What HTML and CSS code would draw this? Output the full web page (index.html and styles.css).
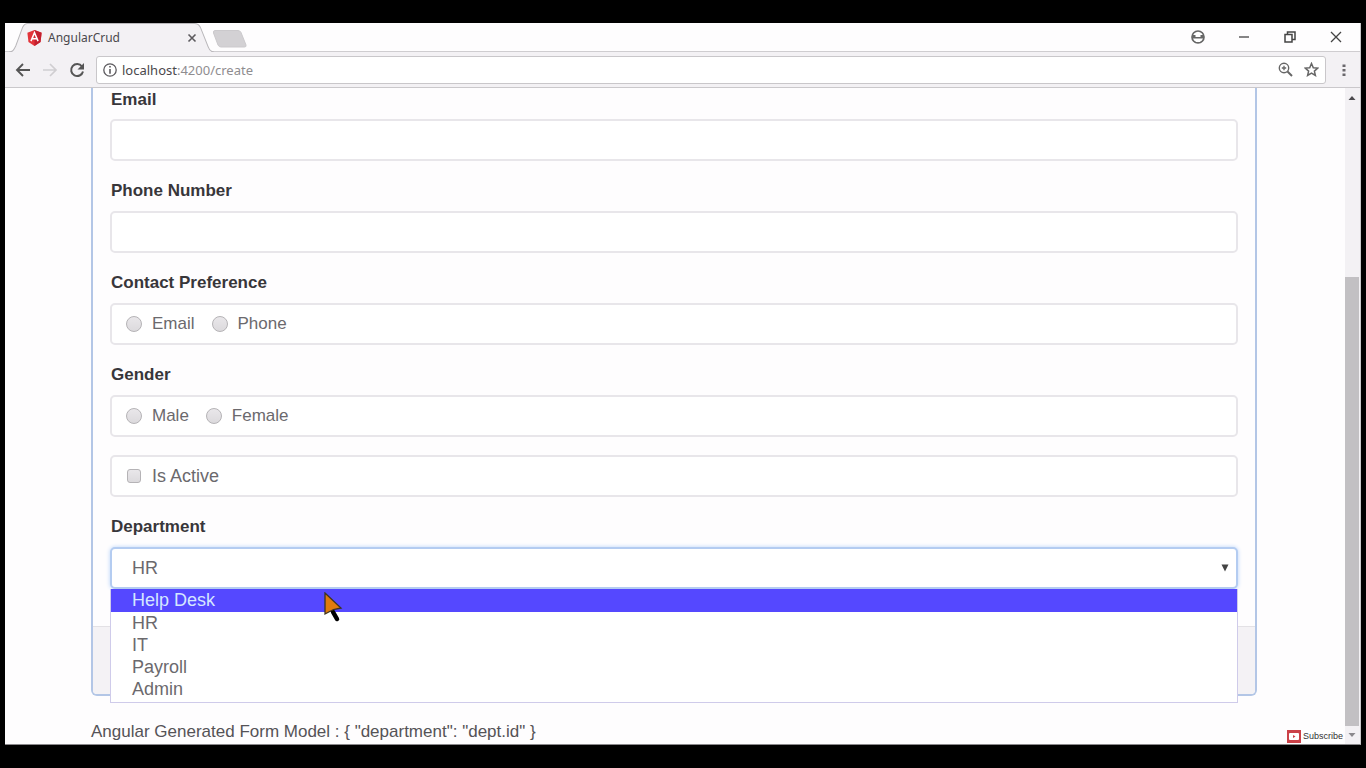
FILE: index.html
```html
<!DOCTYPE html>
<html lang="en">
<head>
<meta charset="utf-8">
<title>AngularCrud</title>
<link rel="stylesheet" href="styles.css">
</head>
<body>
<div class="window">
  <header class="tabstrip">
    <div class="tab">
      <svg class="tab-shape" viewBox="0 0 210 28" preserveAspectRatio="none" aria-hidden="true"><path d="M0 28C4 28 5 26 7 22L14 4Q16 .5 19 .5H190Q194 .5 196 4L204 23Q206 28 210 28" fill="#f3f1f4" stroke="#b9b7ba"/></svg>
      <svg class="favicon" viewBox="0 0 16 18" aria-hidden="true"><path d="M8 0L16 3L14.800 13.500L8 18L1.200 13.500L0 3Z" fill="#e2343a"/><path d="M8 0L16 3L14.800 13.500L8 18Z" fill="#c3202f"/><path d="M4 12.500L8 3L12 12.500M5.700 9.800H10.300" fill="none" stroke="#fff" stroke-width="1.700"/></svg>
      <span class="tab-title">AngularCrud</span>
      <button class="icon-button tab-close" aria-label="Close tab"><svg width="10" height="10" viewBox="0 0 10 10"><path d="M1.500 1.500L8.500 8.500M8.500 1.500L1.500 8.500" stroke="#5c5a5e" stroke-width="1.600"/></svg></button>
    </div>
    <button class="icon-button new-tab" aria-label="New tab"><svg width="36" height="20" viewBox="0 0 36 20"><path d="M3 1.500H26Q28 1.500 29 3.500L34 16Q34.500 18 32.500 18H9Q7 18 6 16L1.500 4Q1 1.500 3 1.500Z" fill="#d3d1d4" stroke="#cbc9cc"/></svg></button>
    <div class="window-controls">
      <button class="icon-button" aria-label="Profile"><svg width="14" height="14" viewBox="0 0 14 14"><circle cx="7" cy="7" r="6" fill="#fff" stroke="#666" stroke-width="1.700"/><path d="M1.500 5H4.500V7H9.500V5H12.500V8.500H1.500Z" fill="#666"/><path d="M3 11Q7 13.500 11 11L10 13H4Z" fill="#666"/></svg></button>
      <button class="icon-button" aria-label="Minimize"><svg width="14" height="14" viewBox="0 0 14 14"><path d="M2 7H12" stroke="#444" stroke-width="1.300"/></svg></button>
      <button class="icon-button" aria-label="Restore"><svg width="14" height="14" viewBox="0 0 14 14"><path d="M2 4.500H9V12H2ZM4.500 4V2H12V9.500H9.500" fill="none" stroke="#444" stroke-width="1.500"/></svg></button>
      <button class="icon-button" aria-label="Close"><svg width="14" height="14" viewBox="0 0 14 14"><path d="M2 2L12 12M12 2L2 12" stroke="#444" stroke-width="1.300"/></svg></button>
    </div>
  </header>
  <nav class="toolbar">
    <button class="icon-button" aria-label="Back"><svg width="16" height="16" viewBox="0 0 16 16"><path d="M15 8H2M8 2L2 8L8 14" fill="none" stroke="#555" stroke-width="1.900"/></svg></button>
    <button class="icon-button" aria-label="Forward"><svg width="16" height="16" viewBox="0 0 16 16"><path d="M1 8H14M8 2L14 8L8 14" fill="none" stroke="#d0ced1" stroke-width="1.700"/></svg></button>
    <button class="icon-button" aria-label="Reload"><svg width="16" height="16" viewBox="0 0 16 16"><path d="M13 4.500A6 6 0 1 0 14 9.500" fill="none" stroke="#555" stroke-width="2"/><path d="M15 1V7.500H8.500Z" fill="#555"/></svg></button>
    <div class="address">
      <svg width="14" height="14" viewBox="0 0 14 14" aria-hidden="true"><circle cx="7" cy="7" r="6.200" fill="none" stroke="#5c5a5e" stroke-width="1.300"/><path d="M7 6V10.800M7 3V4.600" stroke="#5c5a5e" stroke-width="1.600"/></svg>
      <div class="url"><span class="host">localhost</span>:4200/create</div>
      <button class="icon-button" aria-label="Zoom"><svg width="15" height="15" viewBox="0 0 15 15"><circle cx="6" cy="6" r="4.700" fill="none" stroke="#666" stroke-width="1.400"/><path d="M9.500 9.500L14 14" stroke="#666" stroke-width="2"/><path d="M3.800 6H8.200M6 3.800V8.200" stroke="#666" stroke-width="1.300"/></svg></button>
      <button class="icon-button" aria-label="Bookmark"><svg width="15" height="15" viewBox="0 0 15 15"><path d="M7.500 1.500L9.300 5.700L13.800 6.100L10.400 9.100L11.400 13.500L7.500 11.200L3.600 13.500L4.600 9.100L1.200 6.100L5.700 5.700Z" fill="none" stroke="#666" stroke-width="1.500"/></svg></button>
    </div>
    <button class="icon-button" aria-label="Menu"><svg width="16" height="16" viewBox="0 0 16 16"><path d="M6.500 2.500H9.500V5H6.500ZM6.500 7H9.500V9.500H6.500ZM6.500 11.500H9.500V14H6.500Z" fill="#6a686c"/></svg></button>
  </nav>
  <div class="viewport">
    <main class="page">
      <form class="panel">
        <div class="panel-body">
          <div class="group"><label class="title" for="email">Email</label><input class="control" id="email" type="text"></div>
          <div class="group"><label class="title" for="phone">Phone Number</label><input class="control" id="phone" type="text"></div>
          <div class="group" role="radiogroup" aria-labelledby="contact-title">
            <div class="title" id="contact-title">Contact Preference</div>
            <div class="control choices radios">
              <label class="choice"><input class="tick radio" type="radio" name="contact">Email</label>
              <label class="choice"><input class="tick radio" type="radio" name="contact">Phone</label>
            </div>
          </div>
          <div class="group" role="radiogroup" aria-labelledby="gender-title">
            <div class="title" id="gender-title">Gender</div>
            <div class="control choices radios">
              <label class="choice"><input class="tick radio" type="radio" name="gender">Male</label>
              <label class="choice"><input class="tick radio" type="radio" name="gender">Female</label>
            </div>
          </div>
          <div class="group">
            <div class="control choices"><label class="choice"><input class="tick" type="checkbox">Is Active</label></div>
          </div>
          <div class="group">
            <label class="title" for="department">Department</label>
            <div class="select-wrap">
              <select class="control department" id="department"><option>Help Desk</option><option selected>HR</option><option>IT</option><option>Payroll</option><option>Admin</option></select>
              <svg class="select-arrow" width="8" height="8" viewBox="0 0 8 8" aria-hidden="true"><path d="M.5 .5H7.500L4 7.500Z" fill="#444"/></svg>
              <ul class="menu" role="listbox" aria-label="Department">
                <li class="option active" role="option" aria-selected="true">Help Desk</li>
                <li class="option" role="option">HR</li>
                <li class="option" role="option">IT</li>
                <li class="option" role="option">Payroll</li>
                <li class="option" role="option">Admin</li>
              </ul>
              <svg class="pointer" width="20" height="32" viewBox="0 0 20 32" aria-hidden="true"><path d="M9 20L13 27" stroke="#000" stroke-width="4.500" stroke-linecap="round"/><path d="M1 1L17 16L9.500 17.500L1 22Z" fill="#e07b0c" stroke="#3d3420" stroke-width="1.300"/></svg>
            </div>
          </div>
        </div>
        <div class="panel-footer"></div>
      </form>
      <p class="model">Angular Generated Form Model : { "department": "dept.id" }</p>
      <button class="subscribe" type="button"><svg width="14" height="13" viewBox="0 0 14 13" aria-hidden="true"><path d="M0 0H14V13H0Z" fill="#cb4148"/><rect x="2" y="3" width="10" height="7" rx="1" fill="#fff"/><path d="M6 5L8.500 6.500L6 8Z" fill="#cb4148"/></svg><span>Subscribe</span></button>
    </main>
    <div class="scrollbar" aria-hidden="true">
      <svg class="scroll-arrow" viewBox="0 0 14 18"><path d="M3.500 12L7 8L10.500 12Z" fill="#4c4a4e"/></svg>
      <div class="scroll-space"></div>
      <div class="scroll-thumb"></div>
      <svg class="scroll-arrow" viewBox="0 0 14 18"><path d="M3.500 7L7 11L10.500 7Z" fill="#8b898d"/></svg>
    </div>
  </div>
</div>
</body>
</html>
```
FILE: styles.css
```css
* { box-sizing: border-box; }
body {
  margin: 0;
  min-height: 100vh;
  padding: 23px 5px;
  display: flex;
  background: #000;
  font-family: "Liberation Sans", Arial, sans-serif;
  font-size: 17px;
  line-height: 24px;
  color: #555357;
}
.window {
  flex: 1;
  display: flex;
  flex-direction: column;
  background: #fefdfe;
  border-right: 1px solid #c9c7ca;
  border-bottom: 1px solid #8a888b;
}
.icon-button {
  display: flex;
  align-items: center;
  justify-content: center;
  padding: 0;
  border: 0;
  background: none;
}
.tabstrip {
  display: flex;
  height: 29px;
  padding-left: 4px;
  border-bottom: 1px solid #cfcdd0;
}
.tab {
  position: relative;
  display: flex;
  align-items: center;
  gap: 6px;
  width: 205px;
  height: 29px;
  padding: 0 17px 0 18px;
  font-family: "Noto Sans", sans-serif;
  font-size: 12px;
  color: #4a484c;
}
.tab-shape {
  position: absolute;
  inset: 0;
  width: 100%;
  height: 100%;
}
.favicon { position: relative; width: 15px; height: 16px; }
.tab-title { position: relative; flex: 1; }
.tab-close { position: relative; }
.new-tab { margin: 6px 0 0 -2px; height: 20px; }
.window-controls {
  display: flex;
  align-items: center;
  gap: 32px;
  margin-left: auto;
  padding-right: 17px;
}
.toolbar {
  display: flex;
  align-items: center;
  gap: 11px;
  height: 36px;
  padding: 0 8px 0 10px;
  background: #f3f1f4;
  border-bottom: 1px solid #cac8cb;
}
.address {
  flex: 1;
  display: flex;
  align-items: center;
  gap: 11px;
  height: 28px;
  padding: 0 6px;
  margin-right: -1px;
  border: 1px solid #c9c7ca;
  border-radius: 3px;
  background: #fff;
}
.url {
  flex: 1;
  margin-left: -6px;
  font-family: "Noto Sans", sans-serif;
  font-size: 13px;
  color: #8f8d90;
}
.host { color: #4a484c; }
.viewport { flex: 1; display: flex; }
.page {
  position: relative;
  flex: 1;
  padding: 0 88px 0 86px;
}
.panel {
  border: 2px solid #b3c6e6;
  border-top: 0;
  border-radius: 0 0 6px 6px;
}
.panel-body { padding: 0 17px 19px; }
.group { margin-bottom: 18px; }
.group:first-child .title { margin-bottom: 7px; }
.title {
  display: block;
  margin-bottom: 8px;
  padding-left: 1px;
  font-weight: bold;
  color: #38363a;
}
.control {
  display: block;
  width: 100%;
  height: 42px;
  padding: 0 16px;
  border: 2px solid #e8e6ea;
  border-radius: 5px;
  background: #fff;
  font: inherit;
  font-size: 18px;
  color: #6b696d;
}
.choices {
  display: flex;
  align-items: center;
  gap: 17px;
}
.choices.control { padding: 0 14px; }
.radios.control { font-size: 17px; }
.choice { display: flex; align-items: center; gap: 10px; }
.tick {
  appearance: none;
  width: 14px;
  height: 14px;
  margin: 0 1px;
  border: 1px solid #b5b3b6;
  border-radius: 3px;
  background: linear-gradient(#e9e7ea, #dcdadd);
}
.radio { width: 16px; height: 16px; margin: 0; border-radius: 50%; }
.select-wrap { position: relative; }
.department {
  appearance: none;
  padding: 0 20px;
  border-color: #b4ccf1;
  box-shadow: 0 0 4px #b8d4fa;
  outline: 0;
}
.select-arrow { position: absolute; top: 17px; right: 9px; }
.menu {
  position: absolute;
  top: 42px;
  left: 0;
  right: 0;
  margin: 0;
  padding: 0 0 2px;
  list-style: none;
  border: 1px solid #cfcbea;
  border-top: 0;
  background: #fff;
  font-size: 18px;
}
.option { height: 22px; padding: 0 21px; line-height: 22px; color: #6b696d; }
.option.active { height: 23px; background: #5548ff; color: #d4e6ff; }
.pointer { position: absolute; top: 45px; left: 214px; }
.panel-footer {
  height: 68px;
  border-top: 1px solid #e3e1e5;
  border-radius: 0 0 4px 4px;
  background: #f4f2f5;
}
.model { margin: 24px 0 0; }
.subscribe {
  position: absolute;
  right: 2px;
  bottom: 1px;
  display: flex;
  align-items: center;
  gap: 2px;
  padding: 0;
  border: 0;
  background: #fff;
  font-family: "Liberation Sans Narrow", "Liberation Sans", sans-serif;
  font-size: 9px;
  line-height: 13px;
  color: #333;
}
.scrollbar {
  display: flex;
  flex-direction: column;
  width: 15px;
  padding-right: 1px;
  background: #f3f1f4;
}
.scroll-arrow { display: block; width: 14px; height: 18px; }
.scroll-space { flex: 172; }
.scroll-thumb { flex: 450; background: #c2c0c3; }
```
